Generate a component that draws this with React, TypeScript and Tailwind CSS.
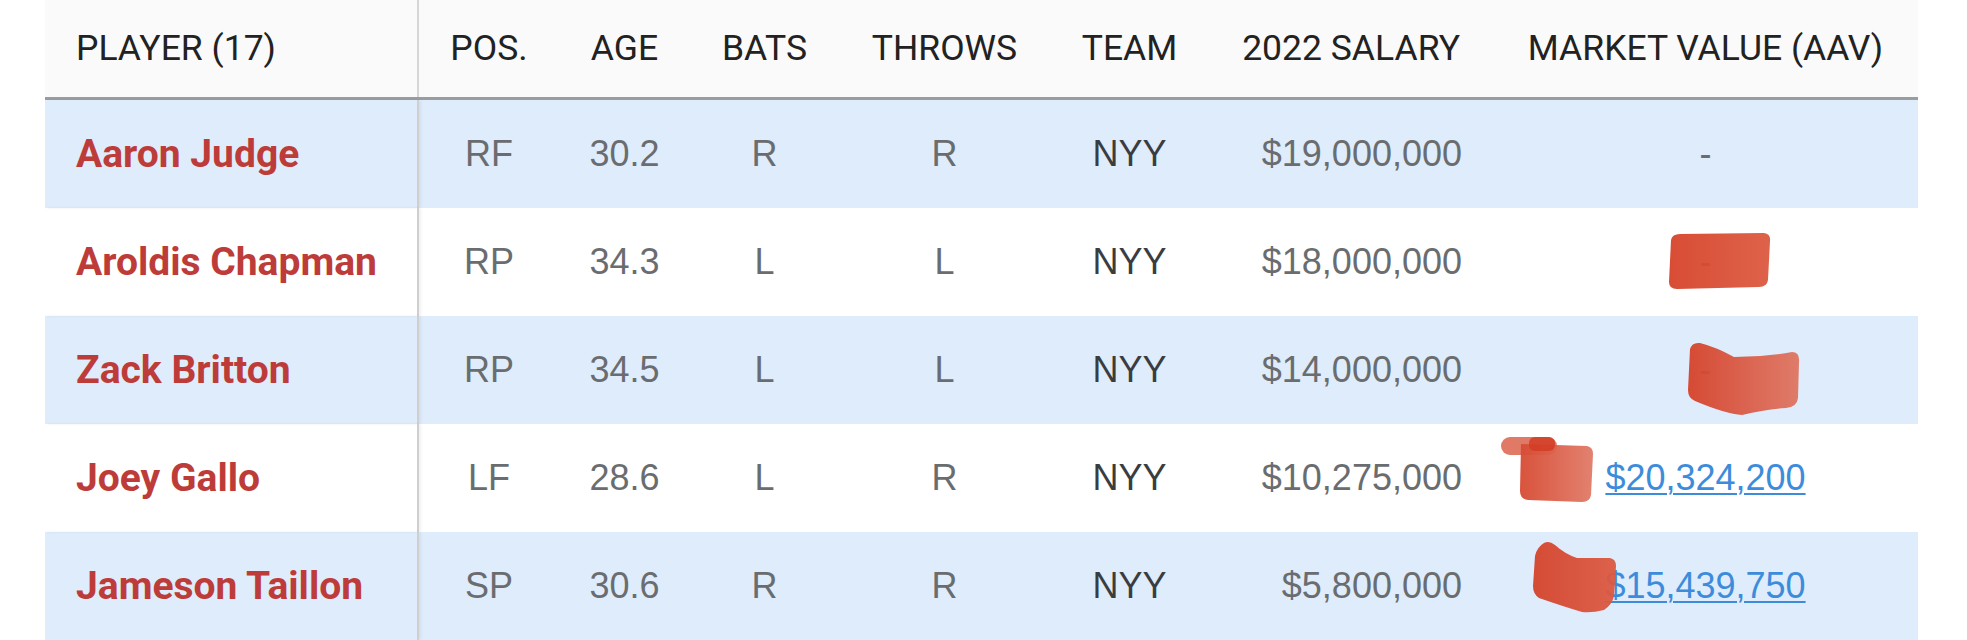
import React from "react";

type Player = {
  name: string;
  pos: string;
  age: string;
  bats: string;
  throws: string;
  team: string;
  salary: string;
  value: string | null;
  mark?: number;
};

const players: Player[] = [
  { name: "Aaron Judge", pos: "RF", age: "30.2", bats: "R", throws: "R", team: "NYY", salary: "$19,000,000", value: null },
  { name: "Aroldis Chapman", pos: "RP", age: "34.3", bats: "L", throws: "L", team: "NYY", salary: "$18,000,000", value: null, mark: 1 },
  { name: "Zack Britton", pos: "RP", age: "34.5", bats: "L", throws: "L", team: "NYY", salary: "$14,000,000", value: null, mark: 2 },
  { name: "Joey Gallo", pos: "LF", age: "28.6", bats: "L", throws: "R", team: "NYY", salary: "$10,275,000", value: "$20,324,200", mark: 3 },
  { name: "Jameson Taillon", pos: "SP", age: "30.6", bats: "R", throws: "R", team: "NYY", salary: "$5,800,000", value: "$15,439,750", mark: 4 },
];

const cols = "grid w-[1873px] grid-cols-[374px_140px_131px_149px_211px_159px_284px_425px]";

// the red marker scribbles drawn over the market value column
const Scribble = ({ n }: { n: number }) => {
  if (n === 1)
    return (
      <svg className="absolute left-[173px] top-[24px]" width="106" height="58" viewBox="0 0 106 58">
        <defs>
          <linearGradient id="g1" x1="0" x2="1" y1="0" y2="0">
            <stop offset="0" stopColor="#d6432a" />
            <stop offset="1" stopColor="#dc5a40" />
          </linearGradient>
        </defs>
        <path d="M5 8 Q6 2 14 2 L98 1 Q105 2 104 9 L102 48 Q101 55 93 55 L11 57 Q3 57 3 50 Z" fill="url(#g1)" opacity="0.95" />
      </svg>
    );
  if (n === 2)
    return (
      <svg className="absolute left-[193px] top-[26px]" width="116" height="74" viewBox="0 0 116 74">
        <defs>
          <linearGradient id="g2" x1="0" x2="1" y1="0" y2="0">
            <stop offset="0" stopColor="#d5422a" />
            <stop offset="1" stopColor="#df7562" />
          </linearGradient>
        </defs>
        <path d="M4 7 Q6 0 14 1 Q30 5 48 15 Q78 15 106 10 Q114 10 113 20 L112 56 Q111 65 100 66 Q80 67 56 73 Q40 72 9 59 Q2 56 2 48 Z" fill="url(#g2)" opacity="0.95" />
      </svg>
    );
  if (n === 3)
    return (
      <svg className="absolute left-[8px] top-[13px]" width="94" height="66" viewBox="0 0 94 66">
        <defs>
          <linearGradient id="g3" x1="0" x2="1" y1="0" y2="0">
            <stop offset="0" stopColor="#d74a32" />
            <stop offset="1" stopColor="#e07b68" />
          </linearGradient>
        </defs>
        <rect x="0" y="0" width="56" height="18" rx="9" fill="#dd6a55" opacity="0.9" />
        <path d="M20 7 L86 9 Q92 10 92 17 L90 58 Q89 65 81 65 L27 63 Q19 62 19 54 Z" fill="url(#g3)" opacity="0.95" />
        <rect x="28" y="0" width="26" height="14" rx="6" fill="#d23a22" opacity="0.8" />
      </svg>
    );
  return (
    <svg className="absolute left-[39px] top-[8px]" width="86" height="74" viewBox="0 0 86 74">
      <defs>
        <linearGradient id="g4" x1="0" x2="1" y1="0" y2="0">
          <stop offset="0" stopColor="#d4432b" />
          <stop offset="1" stopColor="#dc5a42" />
        </linearGradient>
      </defs>
      <path d="M12 3 Q17 0 23 5 Q33 14 45 18 L78 18 Q84 19 84 26 L82 56 Q80 65 72 70 Q60 73 50 72 Q30 66 7 58 Q1 54 1 46 L3 16 Q5 7 12 3 Z" fill="url(#g4)" opacity="0.95" />
    </svg>
  );
};

const App = () => {
  return (
    <div className="w-[1967px] h-[640px] overflow-hidden bg-white pl-[45px]">
      <div className={`${cols} h-[100px] bg-[#fafafa] border-b-[3px] border-[#999da1] font-[Roboto,sans-serif] text-[35.5px] leading-none text-[#222222]`}>
        <div className="flex items-center pl-[31px] border-r-2 border-[#d6d6d6]">PLAYER (17)</div>
        <div className="flex items-center justify-center">POS.</div>
        <div className="flex items-center justify-center">AGE</div>
        <div className="flex items-center justify-center">BATS</div>
        <div className="flex items-center justify-center">THROWS</div>
        <div className="flex items-center justify-center">TEAM</div>
        <div className="flex items-center justify-end pr-[33px]">2022 SALARY</div>
        <div className="flex items-center justify-center">MARKET VALUE (AAV)</div>
      </div>
      {players.map((p, i) => (
        <div
          key={p.name}
          className={`${cols} h-[108px] ${i % 2 === 0 ? "bg-[#dfecfb]" : "bg-white"} font-['Liberation_Sans',Arial,sans-serif] text-[36px] leading-none text-[#6a6d70]`}
        >
          <div className="flex items-center pl-[31px] border-r-2 border-[#cfcfcf] shadow-[2px_0_3px_rgba(0,0,0,0.06)] font-[Roboto,sans-serif] font-bold text-[39px] text-[#bd3c39]">
            {p.name}
          </div>
          <div className="flex items-center justify-center">{p.pos}</div>
          <div className="flex items-center justify-center">{p.age}</div>
          <div className="flex items-center justify-center">{p.bats}</div>
          <div className="flex items-center justify-center">{p.throws}</div>
          <div className="flex items-center justify-center text-[#3a3d40]">{p.team}</div>
          <div className="flex items-center justify-end pr-[31px]">{p.salary}</div>
          <div className="relative flex items-center justify-center">
            {p.value ? (
              <a href="#" className="text-[#3d8cdb] underline decoration-2 underline-offset-[3px]">
                {p.value}
              </a>
            ) : (
              <span className="text-[#6a6d70]">-</span>
            )}
            {p.mark && <Scribble n={p.mark} />}
          </div>
        </div>
      ))}
    </div>
  );
};

export default App;
